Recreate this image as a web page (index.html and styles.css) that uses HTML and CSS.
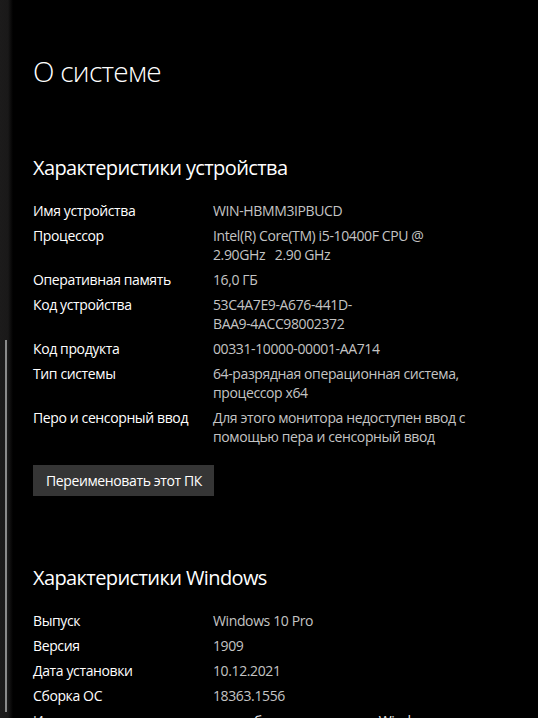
FILE: index.html
```html
<!DOCTYPE html>
<html lang="ru">
<head>
<meta charset="utf-8">
<title>О системе</title>
<link rel="stylesheet" href="styles.css">
</head>
<body>
<div class="scrollbar"></div>
<main class="page">
  <h1 class="title">О системе</h1>

  <section class="section">
    <h2 class="section-title">Характеристики устройства</h2>
    <dl class="specs">
      <div class="row"><dt>Имя устройства</dt><dd>WIN-HBMM3IPBUCD</dd></div>
      <div class="row"><dt>Процессор</dt><dd>Intel(R) Core(TM) i5-10400F CPU @<br>2.90GHz&nbsp;&nbsp;&nbsp;2.90 GHz</dd></div>
      <div class="row"><dt>Оперативная память</dt><dd>16,0 ГБ</dd></div>
      <div class="row"><dt>Код устройства</dt><dd>53C4A7E9-A676-441D-<br>BAA9-4ACC98002372</dd></div>
      <div class="row"><dt>Код продукта</dt><dd>00331-10000-00001-AA714</dd></div>
      <div class="row"><dt>Тип системы</dt><dd>64-разрядная операционная система,<br>процессор x64</dd></div>
      <div class="row"><dt>Перо и сенсорный ввод</dt><dd>Для этого монитора недоступен ввод с<br>помощью пера и сенсорный ввод</dd></div>
    </dl>
    <button class="btn" type="button">Переименовать этот ПК</button>
  </section>

  <section class="section section-windows">
    <h2 class="section-title">Характеристики Windows</h2>
    <dl class="specs">
      <div class="row"><dt>Выпуск</dt><dd>Windows 10 Pro</dd></div>
      <div class="row"><dt>Версия</dt><dd>1909</dd></div>
      <div class="row"><dt>Дата установки</dt><dd>10.12.2021</dd></div>
      <div class="row"><dt>Сборка ОС</dt><dd>18363.1556</dd></div>
    </dl>
    <a class="link" href="#">Изменение ключа продукта или обновление версии Windows</a>
  </section>
</main>
</body>
</html>
```

FILE: styles.css
```css
html, body {
  margin: 0;
  padding: 0;
}

body {
  width: 538px;
  height: 718px;
  overflow: hidden;
  background: linear-gradient(to right, #1c1b1b 0, #1a1919 8px, #000 13px) #000;
  color: #fff;
  font-family: "Open Sans", "Noto Sans", "Liberation Sans", sans-serif;
  position: relative;
}

.scrollbar {
  position: absolute;
  left: 5px;
  top: 340px;
  width: 2px;
  height: 372px;
  background: #8a8a8a;
}

.page {
  padding: 52px 0 0 33px;
}

.title {
  margin: 0;
  font-size: 28px;
  line-height: 38px;
  font-weight: 300;
  letter-spacing: -0.7px;
  color: #fff;
}

.section {
  margin-top: 64px;
}

.section-windows {
  margin-top: 68px;
}

.section-title {
  margin: 0 0 18.5px;
  font-size: 20px;
  line-height: 28px;
  font-weight: 400;
  letter-spacing: -0.6px;
  color: #fff;
}

.specs {
  margin: 0;
  display: flex;
  flex-direction: column;
  gap: 6px;
  font-size: 14px;
  line-height: 19px;
  letter-spacing: -0.38px;
}

.row {
  display: flex;
}

.row dt {
  width: 180px;
  flex: none;
  color: #fff;
}

.row dd {
  margin: 0;
  color: #c4c4c4;
}

.btn {
  margin-top: 19.5px;
  display: block;
  height: 31px;
  width: 181px;
  padding: 0 0 0 1px;
  border: none;
  background: #353535;
  color: #fff;
  font-family: inherit;
  font-size: 14px;
  letter-spacing: -0.38px;
}

.link {
  display: block;
  margin-top: 6px;
  font-size: 14px;
  line-height: 19px;
  letter-spacing: -0.38px;
  color: #e8e8e8;
  text-decoration: none;
}
```
